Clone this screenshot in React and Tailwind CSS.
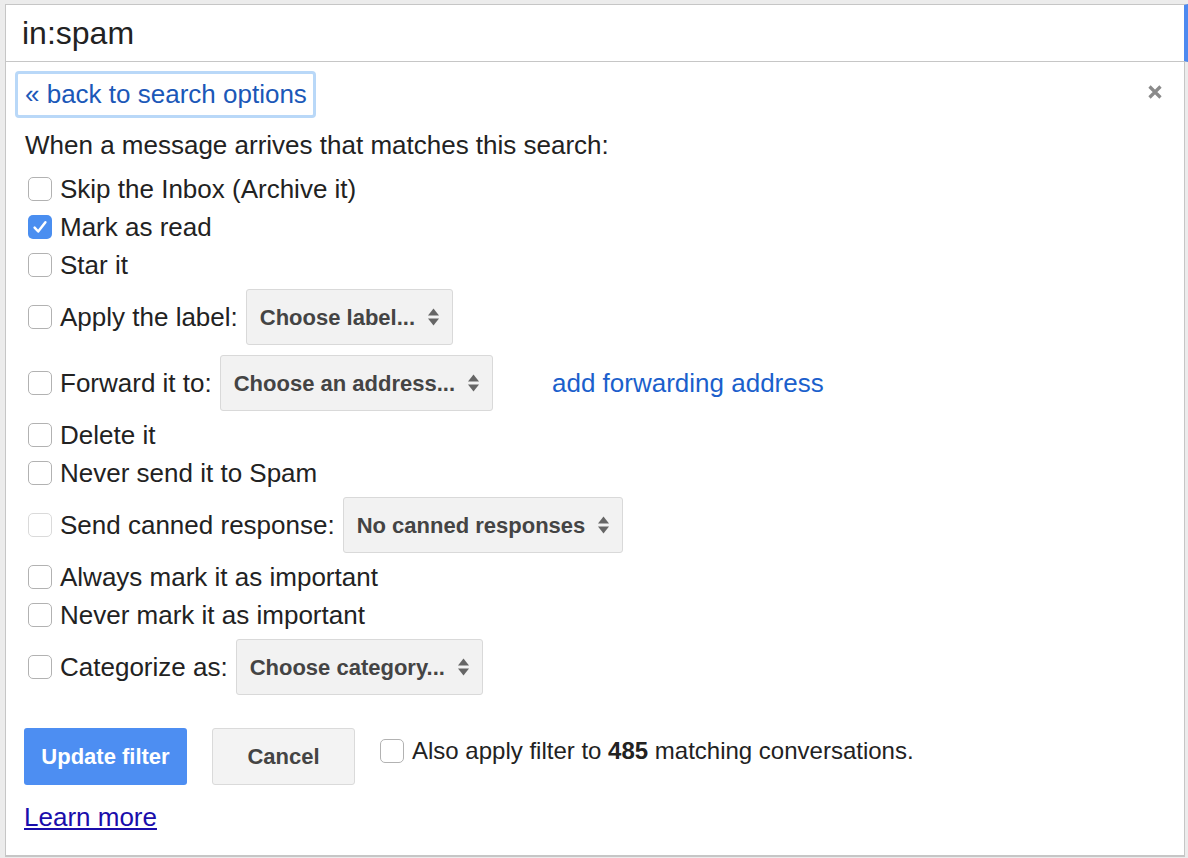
import React from 'react';

const font = { fontFamily: '"Liberation Sans", Arial, sans-serif' };

function Box({ checked, disabled }) {
  if (checked) {
    return (
      <span className="flex h-[24px] w-[24px] shrink-0 items-center justify-center rounded-[5px] bg-[#4a8ef0]">
        <svg width="18" height="18" viewBox="0 0 16 16">
          <path d="M3.2 8.6l3.2 3.4L12.8 3.8" fill="none" stroke="#fff" strokeWidth="2.2" strokeLinecap="round" strokeLinejoin="round" />
        </svg>
      </span>
    );
  }
  return (
    <span
      className={`block h-[24px] w-[24px] shrink-0 rounded-[5px] border bg-white ${
        disabled ? 'border-[#dadada]' : 'border-[#b2b2b2]'
      }`}
    />
  );
}

function Arrows() {
  return (
    <svg width="11" height="20" viewBox="0 0 11 20" className="ml-[13px] shrink-0">
      <path d="M5.5 1.5L11 8.5H0Z" fill="#666" />
      <path d="M5.5 18.5L11 11.5H0Z" fill="#666" />
    </svg>
  );
}

function Select({ text }) {
  return (
    <div className="ml-[8px] flex h-[56px] items-center rounded-[3px] border border-[#d9d9d9] bg-[#f2f2f2] pl-[13px] pr-[13px] text-[22px] font-bold text-[#444]">
      <span>{text}</span>
      <Arrows />
    </div>
  );
}

function Row({ label, checked, disabled, select, extra }) {
  return (
    <div className={`flex items-center ${select ? 'h-[66px]' : 'h-[38px]'}`}>
      <div className="ml-[22px] mr-[8px]">
        <Box checked={checked} disabled={disabled} />
      </div>
      <span className="text-[26px] leading-[30px] text-[#222]">{label}</span>
      {select && <Select text={select} />}
      {extra}
    </div>
  );
}

export default function App() {
  return (
    <div className="h-[858px] w-[1188px] overflow-hidden bg-[#ececec] pl-[5px] pt-[4px]" style={font}>
      {/* search input */}
      <div className="flex h-[58px] items-center border-l border-t border-b border-[#c6c6c6] border-r-[4px] border-r-[#4d8af0] bg-white pl-[16px]">
        <span className="text-[32px] text-[#222]">in:spam</span>
      </div>

      {/* filter panel */}
      <div className="h-[795px] w-[1180px] border-b-[2px] border-l border-r border-[#c6c6c6] bg-white">
        <div className="flex items-start justify-between pl-[9px] pr-[21px] pt-[9px]">
          <a className="rounded-[4px] border-[3px] border-[#b9d8f8] pb-[6px] pl-[7px] pr-[6px] pt-[5px] text-[26px] leading-[30px] text-[#1b58b8]">
            « back to search options
          </a>
          <svg width="16" height="16" viewBox="0 0 16 16" className="mt-[13px]">
            <path d="M2.5 2.5L13.5 13.5M13.5 2.5L2.5 13.5" stroke="#8a8a8a" strokeWidth="3.2" />
          </svg>
        </div>

        <div className="flex h-[52px] items-center pl-[19px] pt-[3px] text-[26px] text-[#222]">
          When a message arrives that matches this search:
        </div>

        <div>
          <Row label="Skip the Inbox (Archive it)" />
          <Row label="Mark as read" checked />
          <Row label="Star it" />
          <Row label="Apply the label:" select="Choose label..." />
          <Row
            label="Forward it to:"
            select="Choose an address..."
            extra={<a className="ml-[59px] text-[26px] text-[#1b5fcc]">add forwarding address</a>}
          />
          <Row label="Delete it" />
          <Row label="Never send it to Spam" />
          <Row label="Send canned response:" disabled select="No canned responses" />
          <Row label="Always mark it as important" />
          <Row label="Never mark it as important" />
          <Row label="Categorize as:" select="Choose category..." />
        </div>

        <div className="mt-[28px] flex items-center pl-[18px]">
          <button className="h-[57px] w-[163px] rounded-[3px] bg-[#4d8ef2] text-[22px] font-bold text-white">
            Update filter
          </button>
          <button className="ml-[25px] h-[57px] w-[143px] rounded-[3px] border border-[#dadada] bg-[#f3f3f3] text-[22px] font-bold text-[#444]">
            Cancel
          </button>
          <div className="ml-[25px] flex items-center gap-[8px] pb-[12px]">
            <Box />
            <span className="text-[24px] text-[#222]">
              Also apply filter to <b>485</b> matching conversations.
            </span>
          </div>
        </div>

        <div className="mt-[13px] pl-[18px]">
          <a className="text-[26px] text-[#1a0dab] underline">Learn more</a>
        </div>
      </div>
    </div>
  );
}
